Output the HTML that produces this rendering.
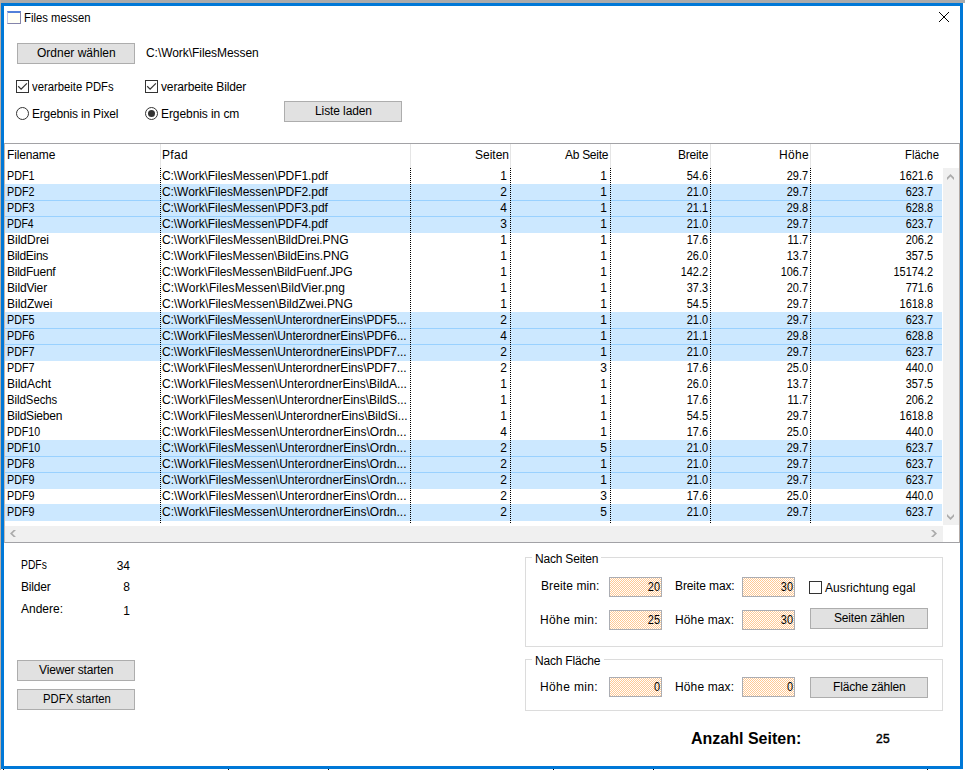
<!DOCTYPE html><html><head><meta charset="utf-8"><title>Files messen</title><style>
*{margin:0;padding:0;box-sizing:border-box}
html,body{width:965px;height:770px;overflow:hidden;background:#fff;position:relative}
body{font-family:"Liberation Sans",sans-serif;font-size:12px;color:#000}
div,span,svg{position:absolute;white-space:pre}
.t{line-height:14px;height:14px}
.btn{background:#e1e1e1;border:1px solid #adadad;height:21px;width:118px}
.cb{width:13px;height:13px;border:1px solid #333;background:#fff}
.rb{width:13px;height:13px;border:1px solid #333;border-radius:50%;background:#fff}
.tb{border:1px solid #abadb3;width:53px;height:20px;background:#fff}
.grp{border:1px solid #dcdcdc}
.sel{background:#cce8ff;left:5px;width:937px;height:17px}
.sl{background:#99d1ff;left:5px;width:937px;height:1px}
.c{line-height:14px;height:14px}
.r{text-align:right}
.n{transform:scaleX(0.91);transform-origin:100% 0}
.p{letter-spacing:-0.085px}
.vs{width:1px;top:168px;height:355px;background-image:linear-gradient(#000 50%,transparent 50%);background-size:1px 2px}
</style></head><body>
<svg width="0" height="0"><defs><pattern id="chk" x="0" y="0" width="2" height="2" patternUnits="userSpaceOnUse"><rect x="1" y="0" width="1" height="1" fill="#ffc994"/><rect x="0" y="1" width="1" height="1" fill="#ffc994"/></pattern></defs></svg>
<div style="left:0;top:0;width:965px;height:3px;background:#ababab"></div>
<div style="left:0;top:0;width:1px;height:770px;background:#bcb0a6"></div>
<div style="left:1px;top:3px;width:962px;height:766px;border:3px solid #0078d7;background:#fff"></div>
<div style="left:7px;top:11px;width:14px;height:13px;border:1px solid #8484aa;border-left-color:#c6c6e6;border-top:2px solid #5280d8;background:#fffff6"></div>
<div class="t" style="left:24.06px;transform:scaleX(0.9419);transform-origin:0 0;top:11px">Files messen</div>
<svg style="left:938px;top:11px" width="12" height="12" viewBox="0 0 12 12"><path d="M1 1L11 11M11 1L1 11" stroke="#000" stroke-width="1"/></svg>
<div class="btn" style="left:17px;top:43px"></div>
<div class="t" style="left:37px;letter-spacing:0.0px;top:46px">Ordner wählen</div>
<div class="t" style="left:146px;letter-spacing:-0.056px;top:46px">C:\Work\FilesMessen</div>
<div class="cb" style="left:16px;top:80px"><svg style="left:0;top:0" width="11" height="11" viewBox="0 0 11 11"><path d="M1.2 5.3L4.1 8.1L9.9 2.3" fill="none" stroke="#333" stroke-width="1.2"/></svg></div>
<div class="t" style="left:32.00px;transform:scaleX(0.9418);transform-origin:0 0;top:80px">verarbeite PDFs</div>
<div class="cb" style="left:145px;top:80px"><svg style="left:0;top:0" width="11" height="11" viewBox="0 0 11 11"><path d="M1.2 5.3L4.1 8.1L9.9 2.3" fill="none" stroke="#333" stroke-width="1.2"/></svg></div>
<div class="t" style="left:161px;letter-spacing:-0.126px;top:80px">verarbeite Bilder</div>
<div class="rb" style="left:16px;top:107px"></div>
<div class="t" style="left:32px;letter-spacing:-0.188px;top:107px">Ergebnis in Pixel</div>
<div class="rb" style="left:145px;top:107px"><div style="left:2px;top:2px;width:7px;height:7px;border-radius:50%;background:#333"></div></div>
<div class="t" style="left:161px;letter-spacing:-0.077px;top:107px">Ergebnis in cm</div>
<div class="btn" style="left:284px;top:101px"></div>
<div class="t" style="left:315px;letter-spacing:-0.1px;top:104px">Liste laden</div>
<div style="left:4px;top:143px;width:956px;height:400px;border:1px solid #a2a2a6;border-left-color:#c4bab4;border-right-color:#b2aaa6"></div>
<div style="left:160px;top:144px;width:1px;height:24px;background:#e5e5e5"></div>
<div style="left:410px;top:144px;width:1px;height:24px;background:#e5e5e5"></div>
<div style="left:510px;top:144px;width:1px;height:24px;background:#e5e5e5"></div>
<div style="left:610px;top:144px;width:1px;height:24px;background:#e5e5e5"></div>
<div style="left:710px;top:144px;width:1px;height:24px;background:#e5e5e5"></div>
<div style="left:810px;top:144px;width:1px;height:24px;background:#e5e5e5"></div>
<div class="c" style="left:7px;top:148px;letter-spacing:-0.143px">Filename</div>
<div class="t" style="left:162px;letter-spacing:0.333px;top:148px">Pfad</div>
<div class="t" style="left:475px;letter-spacing:0.0px;top:148px">Seiten</div>
<div class="t" style="left:565px;letter-spacing:-0.286px;top:148px">Ab Seite</div>
<div class="t" style="left:678px;letter-spacing:-0.2px;top:148px">Breite</div>
<div class="t" style="left:779px;letter-spacing:0.333px;top:148px">Höhe</div>
<div class="t" style="left:905.06px;transform:scaleX(0.9427);transform-origin:0 0;top:148px">Fläche</div>
<div class="sel" style="top:184px"></div>
<div class="sel" style="top:200px"></div>
<div class="sl" style="top:200px"></div>
<div class="sel" style="top:216px"></div>
<div class="sl" style="top:216px"></div>
<div class="sel" style="top:312px"></div>
<div class="sel" style="top:328px"></div>
<div class="sl" style="top:328px"></div>
<div class="sel" style="top:344px"></div>
<div class="sl" style="top:344px"></div>
<div class="sel" style="top:440px"></div>
<div class="sel" style="top:456px"></div>
<div class="sl" style="top:456px"></div>
<div class="sel" style="top:472px"></div>
<div class="sl" style="top:472px"></div>
<div class="sel" style="top:504px"></div>
<div class="c" style="left:7.10px;transform:scaleX(0.8962);transform-origin:0 0;top:169px">PDF1</div>
<div class="c" style="left:162px;top:169px;letter-spacing:-0.074px">C:\Work\FilesMessen\PDF1.pdf</div>
<div class="c r" style="left:407px;width:100px;top:169px">1</div>
<div class="c r" style="left:507px;width:100px;top:169px">1</div>
<div class="c r n" style="left:608px;width:100px;top:169px">54.6</div>
<div class="c r n" style="left:708px;width:100px;top:169px">29.7</div>
<div class="c r n" style="left:833px;width:100px;top:169px">1621.6</div>
<div class="c" style="left:7.10px;transform:scaleX(0.8962);transform-origin:0 0;top:185px">PDF2</div>
<div class="c" style="left:162px;top:185px;letter-spacing:-0.074px">C:\Work\FilesMessen\PDF2.pdf</div>
<div class="c r" style="left:407px;width:100px;top:185px">2</div>
<div class="c r" style="left:507px;width:100px;top:185px">1</div>
<div class="c r n" style="left:608px;width:100px;top:185px">21.0</div>
<div class="c r n" style="left:708px;width:100px;top:185px">29.7</div>
<div class="c r n" style="left:833px;width:100px;top:185px">623.7</div>
<div class="c" style="left:7.10px;transform:scaleX(0.8962);transform-origin:0 0;top:201px">PDF3</div>
<div class="c" style="left:162px;top:201px;letter-spacing:-0.074px">C:\Work\FilesMessen\PDF3.pdf</div>
<div class="c r" style="left:407px;width:100px;top:201px">4</div>
<div class="c r" style="left:507px;width:100px;top:201px">1</div>
<div class="c r n" style="left:608px;width:100px;top:201px">21.1</div>
<div class="c r n" style="left:708px;width:100px;top:201px">29.8</div>
<div class="c r n" style="left:833px;width:100px;top:201px">628.8</div>
<div class="c" style="left:7.13px;transform:scaleX(0.8662);transform-origin:0 0;top:217px">PDF4</div>
<div class="c" style="left:162px;top:217px;letter-spacing:-0.074px">C:\Work\FilesMessen\PDF4.pdf</div>
<div class="c r" style="left:407px;width:100px;top:217px">3</div>
<div class="c r" style="left:507px;width:100px;top:217px">1</div>
<div class="c r n" style="left:608px;width:100px;top:217px">21.0</div>
<div class="c r n" style="left:708px;width:100px;top:217px">29.7</div>
<div class="c r n" style="left:833px;width:100px;top:217px">623.7</div>
<div class="c" style="left:7px;letter-spacing:0.0px;top:233px">BildDrei</div>
<div class="c" style="left:162px;top:233px;letter-spacing:-0.065px">C:\Work\FilesMessen\BildDrei.PNG</div>
<div class="c r" style="left:407px;width:100px;top:233px">1</div>
<div class="c r" style="left:507px;width:100px;top:233px">1</div>
<div class="c r n" style="left:608px;width:100px;top:233px">17.6</div>
<div class="c r n" style="left:708px;width:100px;top:233px">11.7</div>
<div class="c r n" style="left:833px;width:100px;top:233px">206.2</div>
<div class="c" style="left:7px;letter-spacing:-0.286px;top:249px">BildEins</div>
<div class="c" style="left:162px;top:249px;letter-spacing:-0.097px">C:\Work\FilesMessen\BildEins.PNG</div>
<div class="c r" style="left:407px;width:100px;top:249px">1</div>
<div class="c r" style="left:507px;width:100px;top:249px">1</div>
<div class="c r n" style="left:608px;width:100px;top:249px">26.0</div>
<div class="c r n" style="left:708px;width:100px;top:249px">13.7</div>
<div class="c r n" style="left:833px;width:100px;top:249px">357.5</div>
<div class="c" style="left:7px;letter-spacing:-0.25px;top:265px">BildFuenf</div>
<div class="c" style="left:162px;top:265px;letter-spacing:-0.125px">C:\Work\FilesMessen\BildFuenf.JPG</div>
<div class="c r" style="left:407px;width:100px;top:265px">1</div>
<div class="c r" style="left:507px;width:100px;top:265px">1</div>
<div class="c r n" style="left:608px;width:100px;top:265px">142.2</div>
<div class="c r n" style="left:708px;width:100px;top:265px">106.7</div>
<div class="c r n" style="left:833px;width:100px;top:265px">15174.2</div>
<div class="c" style="left:7px;letter-spacing:-0.143px;top:281px">BildVier</div>
<div class="c" style="left:162px;top:281px;letter-spacing:0.065px">C:\Work\FilesMessen\BildVier.png</div>
<div class="c r" style="left:407px;width:100px;top:281px">1</div>
<div class="c r" style="left:507px;width:100px;top:281px">1</div>
<div class="c r n" style="left:608px;width:100px;top:281px">37.3</div>
<div class="c r n" style="left:708px;width:100px;top:281px">20.7</div>
<div class="c r n" style="left:833px;width:100px;top:281px">771.6</div>
<div class="c" style="left:7px;letter-spacing:0.0px;top:297px">BildZwei</div>
<div class="c" style="left:162px;top:297px;letter-spacing:-0.032px">C:\Work\FilesMessen\BildZwei.PNG</div>
<div class="c r" style="left:407px;width:100px;top:297px">1</div>
<div class="c r" style="left:507px;width:100px;top:297px">1</div>
<div class="c r n" style="left:608px;width:100px;top:297px">54.5</div>
<div class="c r n" style="left:708px;width:100px;top:297px">29.7</div>
<div class="c r n" style="left:833px;width:100px;top:297px">1618.8</div>
<div class="c" style="left:7.10px;transform:scaleX(0.8962);transform-origin:0 0;top:313px">PDF5</div>
<div class="c" style="left:162px;top:313px;letter-spacing:-0.095px">C:\Work\FilesMessen\UnterordnerEins\PDF5...</div>
<div class="c r" style="left:407px;width:100px;top:313px">2</div>
<div class="c r" style="left:507px;width:100px;top:313px">1</div>
<div class="c r n" style="left:608px;width:100px;top:313px">21.0</div>
<div class="c r n" style="left:708px;width:100px;top:313px">29.7</div>
<div class="c r n" style="left:833px;width:100px;top:313px">623.7</div>
<div class="c" style="left:7.10px;transform:scaleX(0.8962);transform-origin:0 0;top:329px">PDF6</div>
<div class="c" style="left:162px;top:329px;letter-spacing:-0.095px">C:\Work\FilesMessen\UnterordnerEins\PDF6...</div>
<div class="c r" style="left:407px;width:100px;top:329px">4</div>
<div class="c r" style="left:507px;width:100px;top:329px">1</div>
<div class="c r n" style="left:608px;width:100px;top:329px">21.1</div>
<div class="c r n" style="left:708px;width:100px;top:329px">29.8</div>
<div class="c r n" style="left:833px;width:100px;top:329px">628.8</div>
<div class="c" style="left:7.10px;transform:scaleX(0.8962);transform-origin:0 0;top:345px">PDF7</div>
<div class="c" style="left:162px;top:345px;letter-spacing:-0.095px">C:\Work\FilesMessen\UnterordnerEins\PDF7...</div>
<div class="c r" style="left:407px;width:100px;top:345px">2</div>
<div class="c r" style="left:507px;width:100px;top:345px">1</div>
<div class="c r n" style="left:608px;width:100px;top:345px">21.0</div>
<div class="c r n" style="left:708px;width:100px;top:345px">29.7</div>
<div class="c r n" style="left:833px;width:100px;top:345px">623.7</div>
<div class="c" style="left:7.10px;transform:scaleX(0.8962);transform-origin:0 0;top:361px">PDF7</div>
<div class="c" style="left:162px;top:361px;letter-spacing:-0.095px">C:\Work\FilesMessen\UnterordnerEins\PDF7...</div>
<div class="c r" style="left:407px;width:100px;top:361px">2</div>
<div class="c r" style="left:507px;width:100px;top:361px">3</div>
<div class="c r n" style="left:608px;width:100px;top:361px">17.6</div>
<div class="c r n" style="left:708px;width:100px;top:361px">25.0</div>
<div class="c r n" style="left:833px;width:100px;top:361px">440.0</div>
<div class="c" style="left:7px;letter-spacing:0.0px;top:377px">BildAcht</div>
<div class="c" style="left:162px;top:377px;letter-spacing:-0.023px">C:\Work\FilesMessen\UnterordnerEins\BildA...</div>
<div class="c r" style="left:407px;width:100px;top:377px">1</div>
<div class="c r" style="left:507px;width:100px;top:377px">1</div>
<div class="c r n" style="left:608px;width:100px;top:377px">26.0</div>
<div class="c r n" style="left:708px;width:100px;top:377px">13.7</div>
<div class="c r n" style="left:833px;width:100px;top:377px">357.5</div>
<div class="c" style="left:7.06px;transform:scaleX(0.9422);transform-origin:0 0;top:393px">BildSechs</div>
<div class="c" style="left:162px;top:393px;letter-spacing:-0.023px">C:\Work\FilesMessen\UnterordnerEins\BildS...</div>
<div class="c r" style="left:407px;width:100px;top:393px">1</div>
<div class="c r" style="left:507px;width:100px;top:393px">1</div>
<div class="c r n" style="left:608px;width:100px;top:393px">17.6</div>
<div class="c r n" style="left:708px;width:100px;top:393px">11.7</div>
<div class="c r n" style="left:833px;width:100px;top:393px">206.2</div>
<div class="c" style="left:7px;letter-spacing:-0.222px;top:409px">BildSieben</div>
<div class="c" style="left:162px;top:409px;letter-spacing:-0.068px">C:\Work\FilesMessen\UnterordnerEins\BildSi...</div>
<div class="c r" style="left:407px;width:100px;top:409px">1</div>
<div class="c r" style="left:507px;width:100px;top:409px">1</div>
<div class="c r n" style="left:608px;width:100px;top:409px">54.5</div>
<div class="c r n" style="left:708px;width:100px;top:409px">29.7</div>
<div class="c r n" style="left:833px;width:100px;top:409px">1618.8</div>
<div class="c" style="left:7.11px;transform:scaleX(0.8886);transform-origin:0 0;top:425px">PDF10</div>
<div class="c" style="left:162px;top:425px;letter-spacing:0.0px">C:\Work\FilesMessen\UnterordnerEins\Ordn...</div>
<div class="c r" style="left:407px;width:100px;top:425px">4</div>
<div class="c r" style="left:507px;width:100px;top:425px">1</div>
<div class="c r n" style="left:608px;width:100px;top:425px">17.6</div>
<div class="c r n" style="left:708px;width:100px;top:425px">25.0</div>
<div class="c r n" style="left:833px;width:100px;top:425px">440.0</div>
<div class="c" style="left:7.11px;transform:scaleX(0.8886);transform-origin:0 0;top:441px">PDF10</div>
<div class="c" style="left:162px;top:441px;letter-spacing:0.0px">C:\Work\FilesMessen\UnterordnerEins\Ordn...</div>
<div class="c r" style="left:407px;width:100px;top:441px">2</div>
<div class="c r" style="left:507px;width:100px;top:441px">5</div>
<div class="c r n" style="left:608px;width:100px;top:441px">21.0</div>
<div class="c r n" style="left:708px;width:100px;top:441px">29.7</div>
<div class="c r n" style="left:833px;width:100px;top:441px">623.7</div>
<div class="c" style="left:7.10px;transform:scaleX(0.8962);transform-origin:0 0;top:457px">PDF8</div>
<div class="c" style="left:162px;top:457px;letter-spacing:0.0px">C:\Work\FilesMessen\UnterordnerEins\Ordn...</div>
<div class="c r" style="left:407px;width:100px;top:457px">2</div>
<div class="c r" style="left:507px;width:100px;top:457px">1</div>
<div class="c r n" style="left:608px;width:100px;top:457px">21.0</div>
<div class="c r n" style="left:708px;width:100px;top:457px">29.7</div>
<div class="c r n" style="left:833px;width:100px;top:457px">623.7</div>
<div class="c" style="left:7.10px;transform:scaleX(0.8962);transform-origin:0 0;top:473px">PDF9</div>
<div class="c" style="left:162px;top:473px;letter-spacing:0.0px">C:\Work\FilesMessen\UnterordnerEins\Ordn...</div>
<div class="c r" style="left:407px;width:100px;top:473px">2</div>
<div class="c r" style="left:507px;width:100px;top:473px">1</div>
<div class="c r n" style="left:608px;width:100px;top:473px">21.0</div>
<div class="c r n" style="left:708px;width:100px;top:473px">29.7</div>
<div class="c r n" style="left:833px;width:100px;top:473px">623.7</div>
<div class="c" style="left:7.10px;transform:scaleX(0.8962);transform-origin:0 0;top:489px">PDF9</div>
<div class="c" style="left:162px;top:489px;letter-spacing:0.0px">C:\Work\FilesMessen\UnterordnerEins\Ordn...</div>
<div class="c r" style="left:407px;width:100px;top:489px">2</div>
<div class="c r" style="left:507px;width:100px;top:489px">3</div>
<div class="c r n" style="left:608px;width:100px;top:489px">17.6</div>
<div class="c r n" style="left:708px;width:100px;top:489px">25.0</div>
<div class="c r n" style="left:833px;width:100px;top:489px">440.0</div>
<div class="c" style="left:7.10px;transform:scaleX(0.8962);transform-origin:0 0;top:505px">PDF9</div>
<div class="c" style="left:162px;top:505px;letter-spacing:0.0px">C:\Work\FilesMessen\UnterordnerEins\Ordn...</div>
<div class="c r" style="left:407px;width:100px;top:505px">2</div>
<div class="c r" style="left:507px;width:100px;top:505px">5</div>
<div class="c r n" style="left:608px;width:100px;top:505px">21.0</div>
<div class="c r n" style="left:708px;width:100px;top:505px">29.7</div>
<div class="c r n" style="left:833px;width:100px;top:505px">623.7</div>
<div class="vs" style="left:160px"></div>
<div class="vs" style="left:410px"></div>
<div class="vs" style="left:510px"></div>
<div class="vs" style="left:610px"></div>
<div class="vs" style="left:710px"></div>
<div class="vs" style="left:810px"></div>
<div style="left:943px;top:168px;width:16px;height:357px;background:#f0f0f0"></div>
<div style="left:5px;top:526px;width:938px;height:16px;background:#f0f0f0"></div>
<svg style="left:0;top:0" width="965" height="770"><g fill="#ababab"><polygon points="947,177.6 950.5,174 954,177.6 954,180 950.5,176.4 947,180"/><polygon points="947,514 950.5,517.6 954,514 954,516.4 950.5,520 947,516.4"/><polygon points="10,533.5 13.6,530 16,530 12.4,533.5 16,537 13.6,537"/><polygon points="937,533.5 933.4,530 931,530 934.6,533.5 931,537 933.4,537"/></g></svg>
<div class="t" style="left:21.14px;transform:scaleX(0.8616);transform-origin:0 0;top:558px">PDFs</div>
<div class="t r" style="left:80px;width:50px;top:559px">34</div>
<div class="t" style="left:21px;letter-spacing:-0.2px;top:580px">Bilder</div>
<div class="t r" style="left:80px;width:50px;top:580px">8</div>
<div class="t" style="left:21px;letter-spacing:0.0px;top:602px">Andere:</div>
<div class="t r" style="left:80px;width:50px;top:604px">1</div>
<div class="btn" style="left:17px;top:660px"></div>
<div class="t" style="left:39px;letter-spacing:-0.154px;top:663px">Viewer starten</div>
<div class="btn" style="left:17px;top:689px"></div>
<div class="t" style="left:43.06px;transform:scaleX(0.9428);transform-origin:0 0;top:692px">PDFX starten</div>
<div class="grp" style="left:525px;top:557px;width:418px;height:90px"></div>
<div style="left:532px;top:552px;width:69px;height:12px;background:#fff"></div>
<div class="t" style="left:535px;letter-spacing:-0.2px;top:552px">Nach Seiten</div>
<div class="t" style="left:541px;letter-spacing:0.1px;top:579px">Breite min:</div>
<div class="t" style="left:675px;letter-spacing:-0.1px;top:579px">Breite max:</div>
<div class="t" style="left:540px;letter-spacing:0.375px;top:613px">Höhe min:</div>
<div class="t" style="left:675px;letter-spacing:0.125px;top:613px">Höhe max:</div>
<div class="tb" style="left:609px;top:577px"><svg style="left:0;top:0" width="51" height="18" shape-rendering="crispEdges"><rect width="51" height="18" fill="url(#chk)"/></svg></div>
<div class="t r n" style="left:620px;width:40px;top:580px">20</div>
<div class="tb" style="left:742px;top:577px"><svg style="left:0;top:0" width="51" height="18" shape-rendering="crispEdges"><rect width="51" height="18" fill="url(#chk)"/></svg></div>
<div class="t r n" style="left:753px;width:40px;top:580px">30</div>
<div class="tb" style="left:609px;top:610px"><svg style="left:0;top:0" width="51" height="18" shape-rendering="crispEdges"><rect width="51" height="18" fill="url(#chk)"/></svg></div>
<div class="t r n" style="left:620px;width:40px;top:613px">25</div>
<div class="tb" style="left:742px;top:610px"><svg style="left:0;top:0" width="51" height="18" shape-rendering="crispEdges"><rect width="51" height="18" fill="url(#chk)"/></svg></div>
<div class="t r n" style="left:753px;width:40px;top:613px">30</div>
<div class="cb" style="left:809px;top:581px"></div>
<div class="t" style="left:825px;letter-spacing:0.067px;top:581px">Ausrichtung egal</div>
<div class="btn" style="left:810px;top:608px"></div>
<div class="t" style="left:834px;letter-spacing:-0.167px;top:611px">Seiten zählen</div>
<div class="grp" style="left:525px;top:659px;width:418px;height:52px"></div>
<div style="left:532px;top:654px;width:72px;height:12px;background:#fff"></div>
<div class="t" style="left:535px;letter-spacing:-0.2px;top:654px">Nach Fläche</div>
<div class="t" style="left:540px;letter-spacing:0.375px;top:680px">Höhe min:</div>
<div class="t" style="left:675px;letter-spacing:0.125px;top:680px">Höhe max:</div>
<div class="tb" style="left:609px;top:677px"><svg style="left:0;top:0" width="51" height="18" shape-rendering="crispEdges"><rect width="51" height="18" fill="url(#chk)"/></svg></div>
<div class="t r n" style="left:620px;width:40px;top:680px">0</div>
<div class="tb" style="left:742px;top:677px"><svg style="left:0;top:0" width="51" height="18" shape-rendering="crispEdges"><rect width="51" height="18" fill="url(#chk)"/></svg></div>
<div class="t r n" style="left:753px;width:40px;top:680px">0</div>
<div class="btn" style="left:810px;top:677px"></div>
<div class="t" style="left:833px;letter-spacing:-0.167px;top:680px">Fläche zählen</div>
<div style="left:691px;top:730px;font-size:16px;font-weight:bold;line-height:18px;letter-spacing:0.0px">Anzahl Seiten:</div>
<div class="t" style="left:876px;top:732px;-webkit-text-stroke:0.45px #000;letter-spacing:0.3px">25</div>
<div style="left:3px;top:769px;width:1px;height:1px;background:#000"></div>
<div style="left:228px;top:769px;width:1px;height:1px;background:#000"></div>
<div style="left:328px;top:769px;width:1px;height:1px;background:#000"></div>
<div style="left:553px;top:769px;width:1px;height:1px;background:#000"></div>
<div style="left:653px;top:769px;width:1px;height:1px;background:#000"></div>
<div style="left:927px;top:769px;width:1px;height:1px;background:#000"></div>
</body></html>
